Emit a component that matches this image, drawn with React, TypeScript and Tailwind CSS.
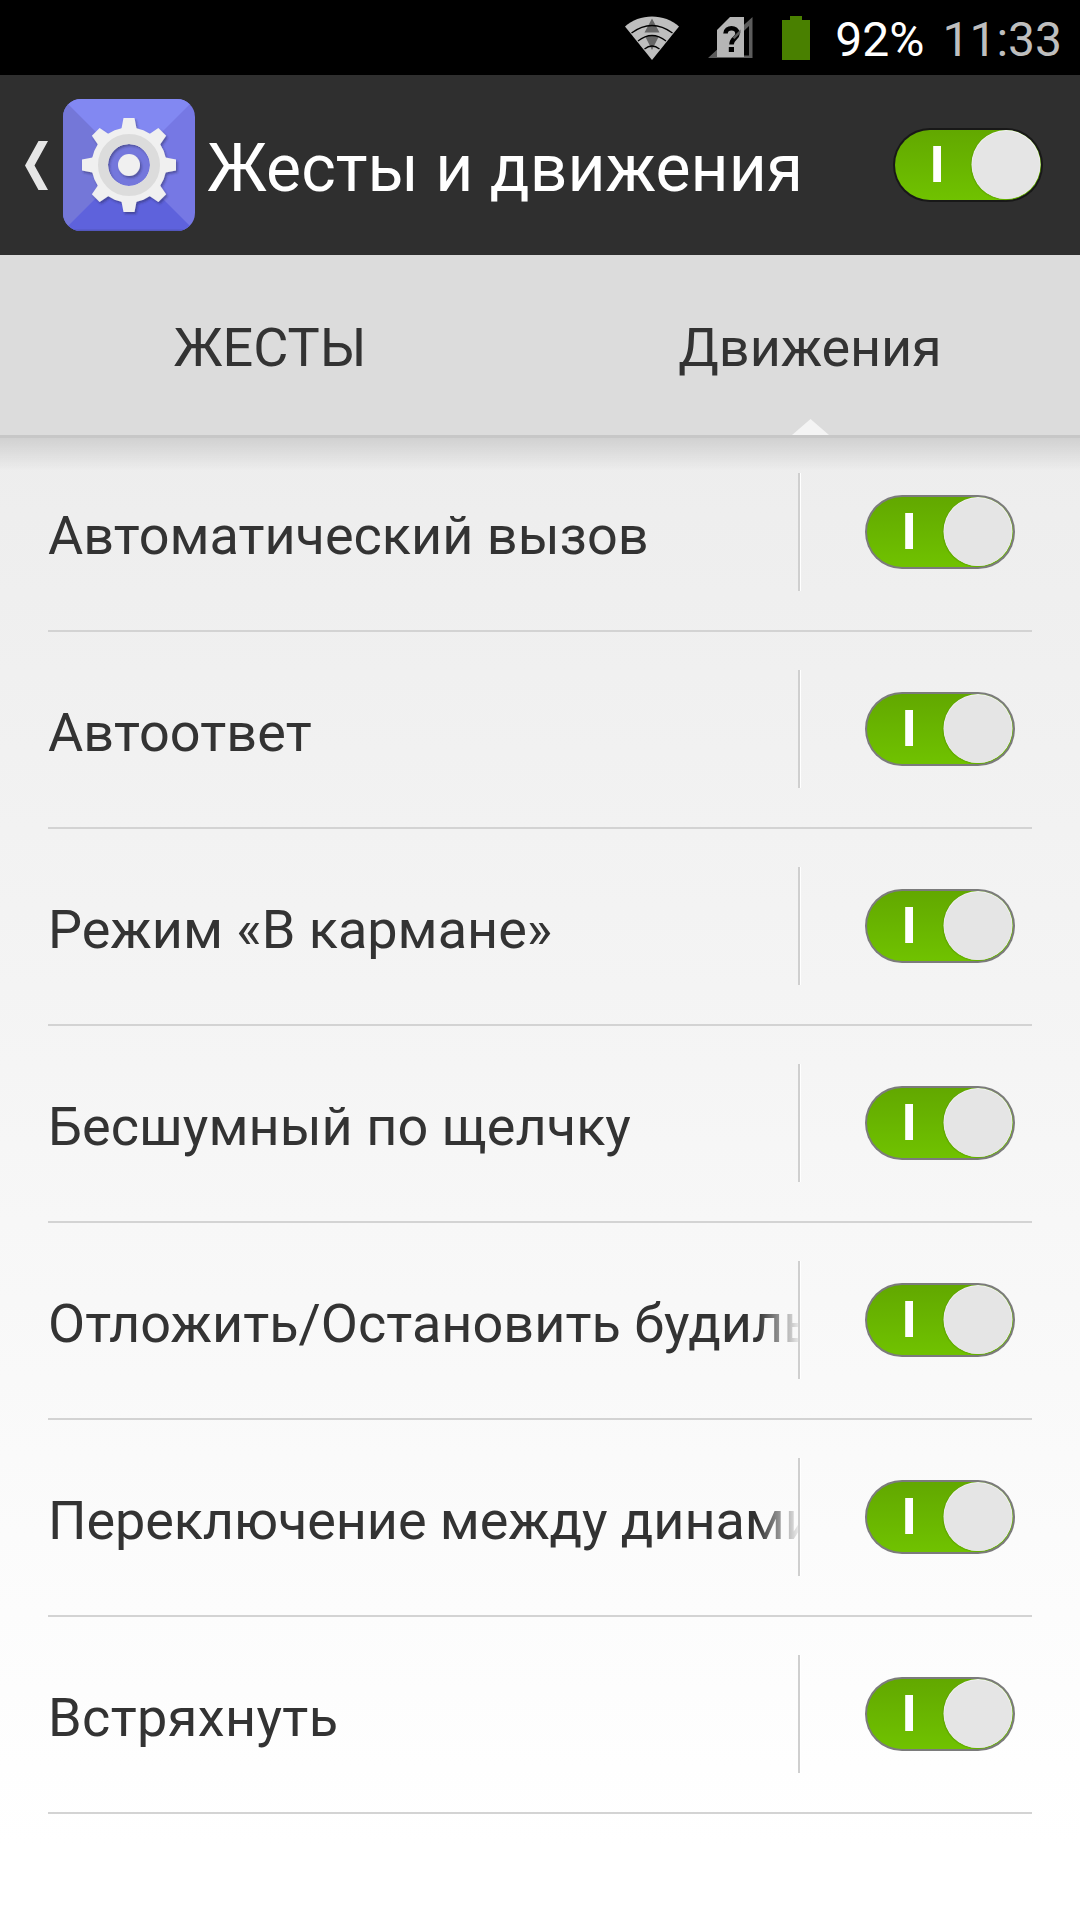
const rows = [
  { label: 'Автоматический вызов', tracking: 'tracking-normal' },
  { label: 'Автоответ', tracking: 'tracking-[0.1px]' },
  { label: 'Режим «В кармане»', tracking: 'tracking-normal' },
  { label: 'Бесшумный по щелчку', tracking: 'tracking-[0.04px]' },
  { label: 'Отложить/Остановить будильник', tracking: 'tracking-[0.03px]' },
  { label: 'Переключение между динамиками', tracking: 'tracking-[-0.09px]' },
  { label: 'Встряхнуть', tracking: 'tracking-[0.38px]' },
];

function Toggle({ dark = false }: { dark?: boolean }) {
  const id = dark ? 'dark' : 'light';
  return (
    <svg width="150" height="74" viewBox="0 0 150 74" className="block shrink-0">
      <defs>
        <linearGradient id={`track-${id}`} x1="0" y1="0" x2="0" y2="1">
          <stop offset="0" stopColor="#62a800" />
          <stop offset="1" stopColor="#70c200" />
        </linearGradient>
        <clipPath id={`clip-${id}`}>
          <rect x="1" y="1" width="148" height="72" rx="36" />
        </clipPath>
      </defs>
      <rect x="0" y="0" width="150" height="74" rx="37" fill={dark ? '#181818' : '#7b7b7b'} />
      <rect x="2" y="2" width="146" height="70" rx="35" fill={`url(#track-${id})`} />
      <g clipPath={`url(#clip-${id})`}>
        <circle cx="112.2" cy="37.2" r="35" fill="#4c8a00" opacity="0.3" />
      </g>
      <circle cx="113" cy="36.5" r="34.5" fill="#f2f2f2" />
      <circle cx="113" cy="37" r="34" fill="#e5e5e5" />
      <rect x="40.2" y="18" width="7.8" height="36" fill="#fff" />
    </svg>
  );
}

function WifiIcon() {
  return (
    <svg width="54" height="44" viewBox="0 0 54 44">
      <path d="M0 10.5C14-3 40-3 54 10.5L27 44Z" fill="#bebebe" />
      <path d="M27 2.500 34.500 16.500h-15ZM20 20h14L27 34Z" fill="#666" />
      <g fill="none" stroke="#000" strokeWidth="1.3">
        <path d="M6.5 17Q27 2 47.500 17" />
        <path d="M13 25Q27 14 41 25" />
        <path d="M19.500 33Q27 27 34.500 33" />
      </g>
    </svg>
  );
}

function SimIcon() {
  return (
    <svg width="45" height="41" viewBox="0 0 45 41">
      <path d="M44.500 0V41H0Z M41 9 11 38.500H41Z" fill="#5c5c5c" fillRule="evenodd" />
      <path d="M22 0H36V40H9V13Z" fill="#b5b5b5" />
      <path
        d="M17.500 16.500C17.500 9.500 29.500 9.500 29.500 16.500C29.500 21.500 23.500 21 23.500 27.500"
        fill="none"
        stroke="#000"
        strokeWidth="4.600"
      />
      <path d="M24.500 20.500 32.500 12.500V16L26.500 22Z" fill="#5c5c5c" />
      <rect x="20.800" y="30" width="5.200" height="5" fill="#000" />
    </svg>
  );
}

function GearIcon() {
  return (
    <svg width="132" height="132" viewBox="0 0 132 132" className="block">
      <defs>
        <clipPath id="tile">
          <rect width="132" height="132" rx="18" />
        </clipPath>
        <filter id="soft" x="-20%" y="-20%" width="140%" height="140%">
          <feDropShadow dx="1.500" dy="2" stdDeviation="1.300" floodColor="#20204f" floodOpacity="0.45" />
        </filter>
        <path id="tooth" d="M60.500 19H71.500L73.500 29.500L78 36H54L58.500 29.500Z" />
      </defs>
      <g clipPath="url(#tile)">
        <rect width="132" height="132" fill="#7678e4" />
        <path d="M0 0 66 66 0 132Z" fill="#7477d8" />
        <path d="M0 0H132L66 66Z" fill="#8288f2" />
        <path d="M0 132 66 66 132 132Z" fill="#5e62dc" />
        <rect y="130.500" width="132" height="1.500" fill="#5357bd" />
      </g>
      <circle cx="66" cy="66" r="23" fill="#7477dc" />
      <g filter="url(#soft)" fill="#f0f0f0">
        {[0, 45, 90, 135, 180, 225, 270, 315].map((a) => (
          <use key={a} href="#tooth" transform={`rotate(${a} 66 66)`} />
        ))}
        <path
          fillRule="evenodd"
          d="M66 28.500a37.500 37.500 0 1 1 0 75a37.500 37.500 0 1 1 0-75ZM66 45a21 21 0 1 0 0 42a21 21 0 1 0 0-42Z"
        />
        <circle cx="66" cy="66" r="11" />
      </g>
      <circle cx="66" cy="66" r="26" fill="none" stroke="#dcdcdc" strokeWidth="10" />
    </svg>
  );
}

export default function App() {
  return (
    <div className="flex h-[1920px] w-[1080px] flex-col overflow-hidden bg-white font-['Roboto',sans-serif] text-[#333]">
      <div className="flex h-[75px] shrink-0 items-start justify-end bg-black pr-[18px] text-[48px] leading-[57px]">
        <div className="mt-4 mr-[29px]">
          <WifiIcon />
        </div>
        <div className="mt-[17px] mr-[29px]">
          <SimIcon />
        </div>
        <div className="mt-4 mr-[25px] flex flex-col items-center">
          <div className="h-1 w-3 bg-[#498000]" />
          <div className="h-10 w-7 bg-[#498000]" />
        </div>
        <div className="mt-[11px] mr-[18px] text-white">92%</div>
        <div className="mt-[11px] text-[#bebebe]">11:33</div>
      </div>

      <header className="flex h-[180px] shrink-0 items-center bg-[#2f2f2f] pr-[37px] pl-[25px]">
        <svg width="23" height="49" viewBox="0 0 23 49" className="mr-[15px] shrink-0">
          <path d="M13.500 0H23L9.500 24.500 23 49H13.500L0 24.500Z" fill="#e6e6e6" />
        </svg>
        <GearIcon />
        <h1 className="ml-[12px] flex-1 pt-[7px] text-[66px] leading-[78px] tracking-[0.04px] whitespace-nowrap text-white">
          Жесты и движения
        </h1>
        <Toggle dark />
      </header>

      <nav className="flex h-[180px] shrink-0 bg-[#dcdcdc] text-[54px] leading-[64px]">
        <div className="flex flex-1 items-center justify-center pt-[5px]">ЖЕСТЫ</div>
        <div className="relative flex flex-1 items-center justify-center pt-[5px] tracking-[-0.1px]">
          Движения
          <svg width="37" height="16" viewBox="0 0 37 16" className="absolute bottom-0 left-[252px]">
            <path d="M18.500 0 37 16H0Z" fill="#f4f4f4" />
          </svg>
        </div>
      </nav>

      <main className="relative flex-1 bg-linear-to-b from-[#ededed] to-[#ffffff] to-[95%] px-12">
        <div className="pointer-events-none absolute inset-x-0 top-0 h-9 border-t-[3px] border-[#c7c7c7] bg-linear-to-b from-black/12 to-black/0" />
        {rows.map(({ label, tracking }) => (
          <div key={label} className="flex h-[197px] items-center border-b-2 border-[#d3d3d3]">
            <div
              className={`w-[750px] overflow-hidden mask-r-from-[710px] mask-r-to-[754px] pt-[6px] text-[54px] leading-[70px] whitespace-nowrap ${tracking}`}
            >
              {label}
            </div>
            <div className="mt-[-2px] h-[118px] w-[3px] border-r border-l-2 border-r-white border-l-[#cfcfcf]" />
            <div className="mt-[-1px] ml-16">
              <Toggle />
            </div>
          </div>
        ))}
      </main>
    </div>
  );
}
